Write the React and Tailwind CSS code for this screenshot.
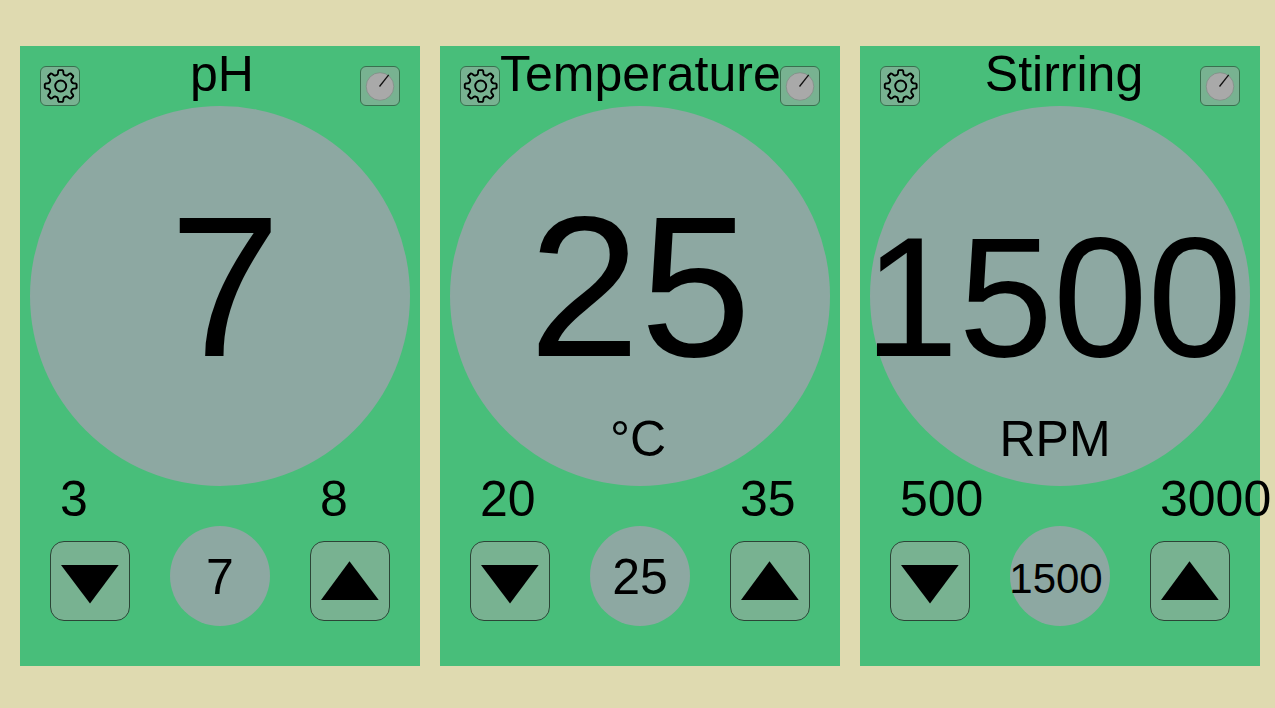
import React from "react";

const channels = [
  { name: "pH", value: "7", unit: "", min: "3", max: "8", size: "one" },
  { name: "Temperature", value: "25", unit: "°C", min: "20", max: "35", size: "two" },
  { name: "Stirring", value: "1500", unit: "RPM", min: "500", max: "3000", size: "four" },
];

const titleSize = { one: "pl-1", two: "", four: "pl-2" };

const readoutSize = {
  one: "text-[200px] leading-[224px] pl-[10px]",
  two: "text-[200px] leading-[224px]",
  four: "text-[170px] leading-[244px] pr-[14px]",
};

const unitSize = { one: "", two: "pr-1", four: "pr-[10px]" };

const targetSize = {
  one: "text-[50px] leading-[102px]",
  two: "text-[50px] leading-[102px]",
  four: "text-[42px] leading-[106px] pr-2",
};

// Eight-toothed gear outline, centred on (cx, cy).
function gearPath(cx, cy) {
  const tooth = [
    [11.7, -22.5],
    [11.8, -18],
    [12.3, -14],
    [13.4, -11.5],
    [15.2, -9.5],
    [16, -6.5],
    [16, 6.5],
    [15.2, 9.5],
    [13.4, 11.5],
    [12.3, 14],
    [11.8, 18],
  ];
  const points = [];
  for (let i = 0; i < 8; i++) {
    for (const [r, deg] of tooth) {
      const a = ((deg + i * 45) * Math.PI) / 180;
      points.push([cx + r * Math.cos(a), cy + r * Math.sin(a)]);
    }
  }
  return "M" + points.map(([x, y]) => `${x.toFixed(2)} ${y.toFixed(2)}`).join("L") + "Z";
}

const gear = gearPath(19.7, 19);

const iconButton =
  "mt-5 h-10 w-10 shrink-0 rounded-[6px] border border-[#39704f] bg-[#78b291]";
const stepButton =
  "block h-20 w-20 rounded-[14px] border border-[#2b4536] bg-[#78b291]";

function Channel({ name, value, unit, min, max, size }) {
  return (
    <section className="min-w-[400px] flex-1 bg-[#48be7a] pb-[45px]">
      <header className="flex h-[60px] items-start justify-between px-5">
        <button type="button" aria-label={`${name} settings`} className={iconButton}>
          <svg viewBox="0 0 38 38" className="block h-full w-full" fill="none" stroke="#000" strokeWidth="1.9" strokeLinejoin="round">
            <path d={gear} />
            <circle cx="19.7" cy="19" r="5.5" />
          </svg>
        </button>
        <h2 className={`min-w-0 whitespace-nowrap text-[50px] leading-[56px] ${titleSize[size]}`}>{name}</h2>
        <button type="button" aria-label={`${name} gauge`} className={iconButton}>
          <svg viewBox="0 0 38 38" className="block h-full w-full">
            <circle cx="19" cy="19.5" r="13.8" fill="#a9a9a9" stroke="#7d8a82" strokeWidth="0.7" />
            <path d="M18.5 19.5L27.7 7.9" stroke="#111" strokeWidth="1.3" />
          </svg>
        </button>
      </header>

      <div className="mx-[10px] flex aspect-square flex-col items-center rounded-full bg-[#8da8a2] pt-[69px]">
        <div className="flex h-[224px] items-start justify-center">
          <output className={`block whitespace-nowrap ${readoutSize[size]}`}>{value}</output>
        </div>
        <p className={`mt-3 text-[50px] leading-[56px] ${unitSize[size]}`}>{unit}</p>
      </div>

      <div className="-mt-[15px] flex items-end justify-between px-[30px]">
        <div className="flex w-20 flex-col gap-[14px]">
          <span className="pl-[10px] text-[50px] leading-[56px]">{min}</span>
          <button type="button" aria-label={`Decrease ${name}`} className={stepButton}>
            <svg viewBox="0 0 78 78" className="block h-full w-full">
              <path d="M10 23H67.7L39 61.5Z" />
            </svg>
          </button>
        </div>
        <div className="-mb-[5px] flex h-[100px] w-[100px] items-start justify-center rounded-full bg-[#8da8a2]">
          <output className={`block ${targetSize[size]}`}>{value}</output>
        </div>
        <div className="flex w-20 flex-col gap-[14px]">
          <span className="pl-[10px] text-[50px] leading-[56px]">{max}</span>
          <button type="button" aria-label={`Increase ${name}`} className={stepButton}>
            <svg viewBox="0 0 78 78" className="block h-full w-full">
              <path d="M10 58H67.7L38.5 19.3Z" />
            </svg>
          </button>
        </div>
      </div>
    </section>
  );
}

export default function App() {
  return (
    <main className="flex min-h-screen flex-wrap items-start gap-5 bg-[#dfdab0] pt-[46px] pr-[15px] pb-10 pl-5 font-['Liberation_Sans',Arial,sans-serif] text-black">
      {channels.map((c) => (
        <Channel key={c.name} {...c} />
      ))}
    </main>
  );
}
